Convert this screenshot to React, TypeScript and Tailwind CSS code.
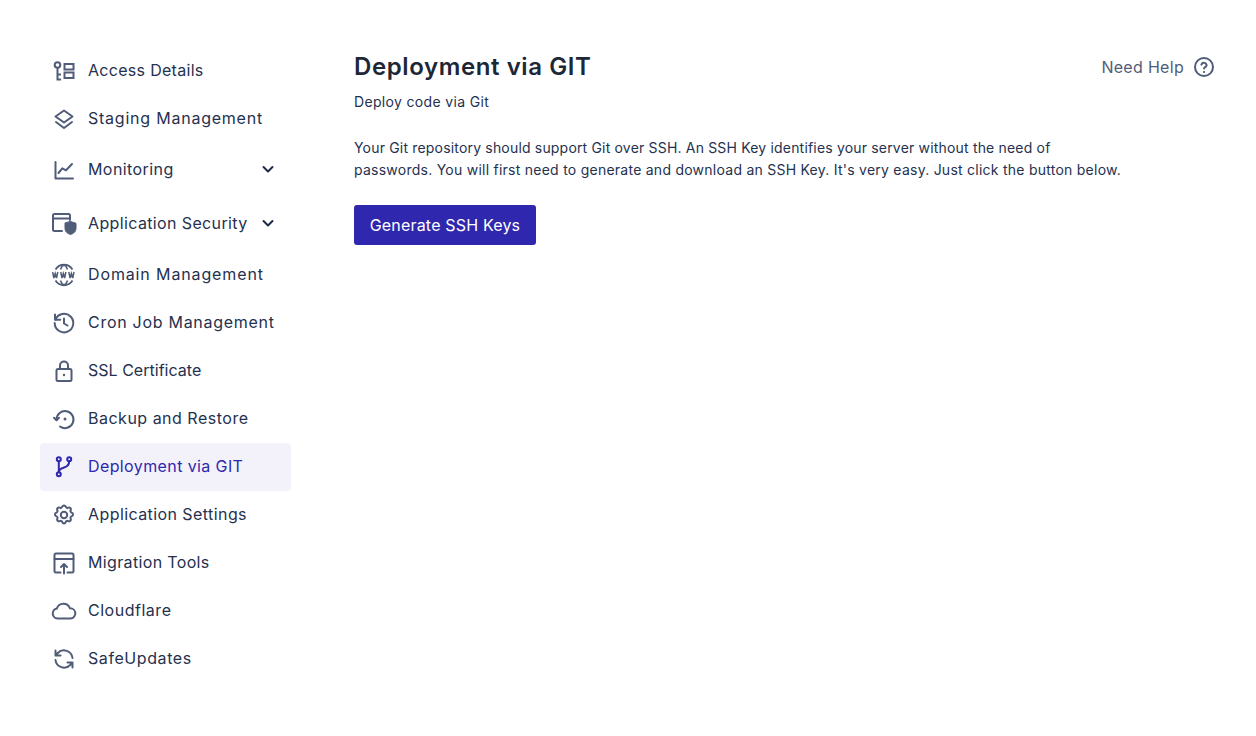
import React from "react";

const P = { fill: "none", stroke: "currentColor", strokeWidth: 2, strokeLinecap: "round" as const, strokeLinejoin: "round" as const };

function Svg({ children }: { children: React.ReactNode }) {
  return (
    <svg width="24" height="24" viewBox="0 0 24 24" className="shrink-0 text-[#515d78]" {...P}>
      {children}
    </svg>
  );
}

const icons: Record<string, React.ReactNode> = {
  access: (
    <Svg>
      <circle cx="5.5" cy="6" r="2.8" />
      <path d="M5.5 9v11.5H9M5.5 15.5H9" strokeLinecap="butt" strokeLinejoin="miter" />
      <rect x="12.5" y="5" width="9" height="5.5" strokeLinejoin="miter" />
      <rect x="12.5" y="13.5" width="9" height="5.5" strokeLinejoin="miter" />
    </Svg>
  ),
  layers: (
    <Svg>
      <path d="M12 3.5l8.5 6-8.5 6-8.5-6z" />
      <path d="M4 15l8 6 8-6" />
    </Svg>
  ),
  chart: (
    <Svg>
      <path d="M3.5 4v16.5H21" />
      <path d="M6.5 15l3.8-4.7 3.7 2 6-6.3" />
    </Svg>
  ),
  security: (
    <svg width="26" height="24" viewBox="0 0 26 24" className="shrink-0 text-[#515d78] -ml-[1px] -mr-[1px]" {...P}>
      <path d="M11 19H3.5A1.5 1.5 0 0 1 2 17.5v-14A1.5 1.5 0 0 1 3.5 2h14A1.5 1.5 0 0 1 19 3.5V8M2 6.5h17" />
      <path d="M19.5 9.5l5.5 1.8v5.2c0 3-2.2 5-5.5 6-3.3-1-5.5-3-5.5-6v-5.2z" fill="currentColor" strokeWidth="1" />
    </svg>
  ),
  www: (
    <Svg>
      <path d="M3.5 6.5A10 10 0 0 1 20.5 6.5M3.5 17.5A10 10 0 0 0 20.5 17.5" strokeWidth="1.8" strokeLinecap="butt" />
      <path d="M8.5 6.5C9.3 4 10.5 2.5 12 2c1.5.5 2.7 2 3.5 4.5M8.5 17.5c.8 2.5 2 4 3.5 4.5 1.5-.5 2.7-2 3.5-4.5" strokeWidth="1.5" strokeLinecap="butt" />
      <path d="M.6 9l1.3 6 1.3-4.5L4.5 15l1.3-6M8.7 9l1.3 6 1.3-4.5 1.3 4.5 1.3-6M16.8 9l1.3 6 1.3-4.5 1.3 4.5 1.3-6" strokeWidth="1.5" strokeLinecap="butt" strokeLinejoin="miter" />
    </Svg>
  ),
  history: (
    <Svg>
      <path d="M3 3.5v5.2h5.2" />
      <path d="M3.4 8.5A9.3 9.3 0 1 1 2.7 12" />
      <path d="M12 7.5V12.5l3.5 2" />
    </Svg>
  ),
  lock: (
    <Svg>
      <rect x="4.5" y="10" width="15" height="12" rx="1.5" />
      <path d="M8 10V6.5a4 4 0 0 1 8 0V10" />
      <circle cx="12" cy="16" r="1.2" fill="currentColor" stroke="none" />
    </Svg>
  ),
  restore: (
    <Svg>
      <path d="M4.5 13A8.5 8.5 0 1 1 8 19.5" />
      <path d="M2 10.8L4.5 13.3 7 10.8" />
      <circle cx="13" cy="12" r="1.5" fill="currentColor" stroke="none" />
    </Svg>
  ),
  git: (
    <svg width="24" height="24" viewBox="0 0 24 24" className="shrink-0 text-[#2f27ae]" {...P}>
      <circle cx="6.8" cy="4.3" r="2" />
      <circle cx="6.8" cy="19.3" r="2" />
      <circle cx="17.2" cy="4.3" r="2" />
      <path d="M6.8 6.3v11M17.2 6.3c0 3.5-2.5 5.5-5 6.2s-5.4 1.5-5.4 4.8" />
    </svg>
  ),
  gear: (
    <Svg>
      <circle cx="12" cy="12" r="3.2" />
      <path d="M10.3 3.6a1.8 1.8 0 0 1 3.4 0 1.8 1.8 0 0 0 2.6 1.1 1.8 1.8 0 0 1 2.4 2.4 1.8 1.8 0 0 0 1.1 2.6 1.8 1.8 0 0 1 0 3.4 1.8 1.8 0 0 0-1.1 2.6 1.8 1.8 0 0 1-2.4 2.4 1.8 1.8 0 0 0-2.6 1.1 1.8 1.8 0 0 1-3.4 0 1.8 1.8 0 0 0-2.6-1.1 1.8 1.8 0 0 1-2.4-2.4 1.8 1.8 0 0 0-1.1-2.6 1.8 1.8 0 0 1 0-3.4 1.8 1.8 0 0 0 1.1-2.6 1.8 1.8 0 0 1 2.4-2.4 1.8 1.8 0 0 0 2.6-1.1z" />
    </Svg>
  ),
  migrate: (
    <Svg>
      <path d="M8.5 21.5H4A1.5 1.5 0 0 1 2.5 20V4A1.5 1.5 0 0 1 4 2.5h16A1.5 1.5 0 0 1 21.5 4v16a1.5 1.5 0 0 1-1.5 1.5h-4.5" />
      <path d="M2.5 8h19" />
      <path d="M12 22.5v-9M9 16l3-3 3 3" />
    </Svg>
  ),
  cloud: (
    <svg width="26" height="24" viewBox="0 0 26 24" className="shrink-0 text-[#515d78] -ml-[1px] -mr-[1px]" {...P}>
      <path d="M6.5 19.5a5 5 0 0 1-.7-9.9A7 7 0 0 1 19 9.3a5.1 5.1 0 0 1 .5 10.2z" />
    </svg>
  ),
  refresh: (
    <Svg>
      <path d="M20.5 11A8.6 8.6 0 0 0 5.8 6L3.5 8.5M3.5 3.5v5h5" />
      <path d="M3.5 13A8.6 8.6 0 0 0 18.2 18l2.3-2.5M20.5 20.5v-5h-5" />
    </Svg>
  ),
};

function Chevron() {
  return (
    <svg width="16" height="16" viewBox="0 0 16 16" fill="none" stroke="#1e2a4a" strokeWidth="2" strokeLinecap="round" strokeLinejoin="round" className="ml-auto mr-[7px] mb-[2px]">
      <path d="M3.5 6l4.5 4.5L12.5 6" />
    </svg>
  );
}

const items: { icon: string; label: string; h: string; ls: string; chev?: boolean; active?: boolean }[] = [
  { icon: "access", label: "Access Details", h: "h-12", ls: "tracking-[0.3px]" },
  { icon: "layers", label: "Staging Management", h: "h-12", ls: "tracking-[0.77px]" },
  { icon: "chart", label: "Monitoring", h: "h-[54px]", ls: "tracking-[0.42px]", chev: true },
  { icon: "security", label: "Application Security", h: "h-[54px]", ls: "tracking-[0.37px]", chev: true },
  { icon: "www", label: "Domain Management", h: "h-12", ls: "tracking-[0.87px]" },
  { icon: "history", label: "Cron Job Management", h: "h-12", ls: "tracking-[0.72px]" },
  { icon: "lock", label: "SSL Certificate", h: "h-12", ls: "tracking-[0.02px]" },
  { icon: "restore", label: "Backup and Restore", h: "h-12", ls: "tracking-[0.5px]" },
  { icon: "git", label: "Deployment via GIT", h: "h-12", ls: "tracking-[0.39px]", active: true },
  { icon: "gear", label: "Application Settings", h: "h-12", ls: "tracking-[0.42px]" },
  { icon: "migrate", label: "Migration Tools", h: "h-12", ls: "tracking-[0.35px]" },
  { icon: "cloud", label: "Cloudflare", h: "h-12", ls: "tracking-[0.52px]" },
  { icon: "refresh", label: "SafeUpdates", h: "h-12", ls: "tracking-[0.58px]" },
];

export default function App() {
  return (
    <div className="min-h-[736px] bg-white flex font-['Inter',sans-serif] text-[#25314f]">
      <nav className="w-[251px] ml-10 mt-[47px] shrink-0 flex flex-col">
        {items.map((it) => (
          <div
            key={it.label}
            className={`${it.h} flex items-center gap-3 pl-3 pr-2 rounded-[4px] text-[16px] ${it.active ? "bg-[#f3f2fb] text-[#2f27ae]" : ""}`}
          >
            {icons[it.icon]}
            <span className={`pb-[2px] ${it.ls}`}>{it.label}</span>
            {it.chev && <Chevron />}
          </div>
        ))}
      </nav>
      <main className="ml-[63px] flex-1 pr-[42px] pt-[49px]">
        <div className="flex items-center justify-between h-9">
          <h1 className="text-[24px] font-semibold leading-9 text-[#1d2736] tracking-[0.6px]">Deployment via GIT</h1>
          <div className="flex items-center gap-[10px] text-[#515d78] text-[16px] tracking-[0.3px]">
            <span>Need Help</span>
            <svg width="20" height="20" viewBox="0 0 20 20" fill="none" stroke="currentColor" strokeWidth="2" strokeLinecap="round">
              <circle cx="10" cy="10" r="9" />
              <path d="M7.4 7.6a2.7 2.7 0 0 1 5.2.6c0 1.8-2.6 2-2.6 3.4" />
              <circle cx="10" cy="15" r="0.6" fill="currentColor" strokeWidth="1" />
            </svg>
          </div>
        </div>
        <p className="mt-[6px] text-[14px] leading-[22px] tracking-[0.34px]">Deploy code via Git</p>
        <p className="mt-6 text-[14px] leading-[22px] w-[800px]">
          <span className="block tracking-[0.18px]">Your Git repository should support Git over SSH. An SSH Key identifies your server without the need of</span>
          <span className="block tracking-[0.25px]">passwords. You will first need to generate and download an SSH Key. It's very easy. Just click the button below.</span>
        </p>
        <button className="mt-6 w-[182px] h-10 rounded-[3px] bg-[#2f27ae] text-white text-[16px] tracking-[0.18px]">Generate SSH Keys</button>
      </main>
    </div>
  );
}
